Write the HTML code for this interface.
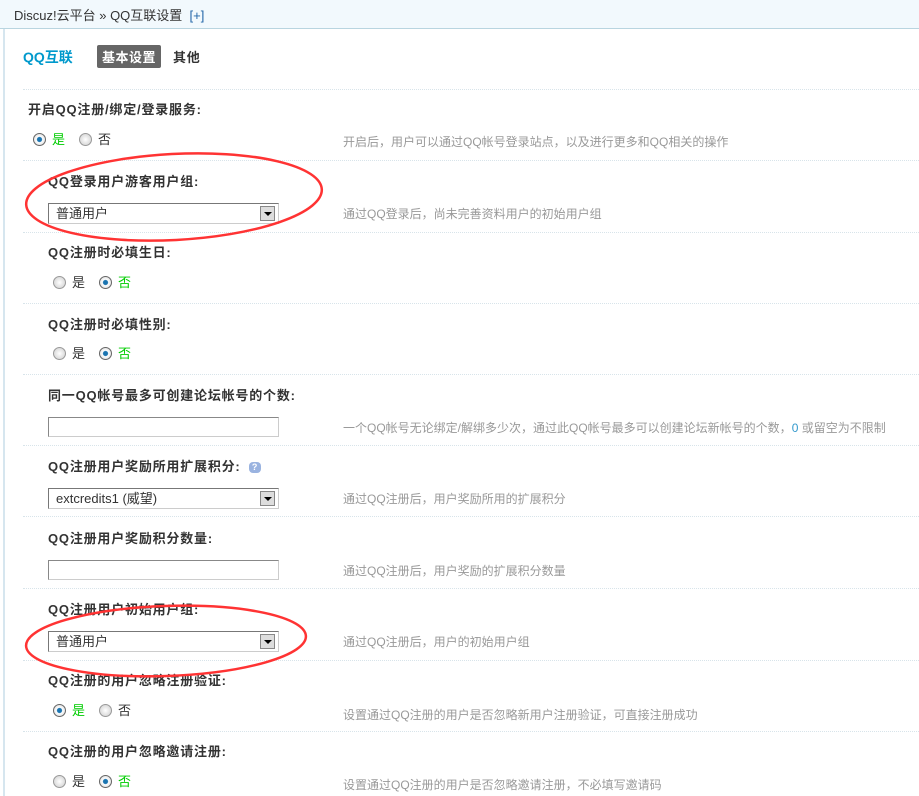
<!DOCTYPE html>
<html><head><meta charset="utf-8"><style>
body{margin:0;width:919px;height:796px;overflow:hidden;background:#fff;font:12px "Liberation Sans","Noto Sans CJK SC",sans-serif;color:#333;position:relative}
.a{position:absolute;white-space:nowrap}
.hd{position:absolute;left:0;top:0;width:919px;height:28px;background:#f2f9fd;border-bottom:1px solid #b9d5e0}
.lb{position:absolute;left:3px;top:29px;width:2px;height:767px;background:#d6e6ef}
.sep{position:absolute;left:23px;right:0;border-top:1px dotted #d8e4ea}
.lab{font-weight:bold;color:#333;font-size:13px;letter-spacing:0.8px}
.d{color:#999;font-size:12px}
.r{display:inline-block;width:13px;height:13px;border-radius:50%;border:1px solid #999;background:radial-gradient(#fff,#ccc);vertical-align:-2px;box-sizing:border-box;margin-right:6px}
.r.on{background:radial-gradient(#1a74b0 28%,#fff 38%,#ccc);border-color:#666}
.g{color:#0c0}
.rd{font-size:13px}
.rd .s{display:inline-block;width:14px}
.sel{position:absolute;left:48px;width:231px;height:21px;border:1px solid #888;border-color:#777 #ccc #ccc #777;box-sizing:border-box;background:#fff;font-size:13px;line-height:19px;padding-left:7px}
.sel i{position:absolute;right:3px;top:2px;width:15px;height:15px;border:1px solid #888;background:#ddd;box-sizing:border-box}
.sel i:after{content:"";position:absolute;left:3px;top:5px;border:4px solid transparent;border-top:4px solid #000}
.inp{position:absolute;left:48px;width:231px;height:20px;border:1px solid;border-color:#888 #ccc #ccc #888;box-sizing:border-box}
</style></head><body>
<div class="hd"></div>
<div class="a" style="left:14px;top:5px;color:#333;font-size:13px">Discuz!云平台 » QQ互联设置 &nbsp;<span style="color:#2366a8">[+]</span></div>
<div class="lb"></div>
<div class="a" style="left:23px;top:47px;color:#09c;font-weight:bold;font-size:14px">QQ互联</div>
<div class="a" style="left:97px;top:45px;background:#666;color:#fff;font-weight:bold;padding:2px 5px;border-radius:2px;font-size:13px;letter-spacing:0.5px">基本设置</div>
<div class="a lab" style="left:173px;top:47px">其他</div>

<div class="sep" style="top:89px"></div>
<div class="a lab" style="left:28px;top:99px">开启QQ注册/绑定/登录服务:</div>
<div class="a rd" style="left:33px;top:129px"><span class="r on"></span><span class="g">是</span><span class="s"></span><span class="r"></span>否</div>
<div class="a d" style="left:343px;top:133px">开启后，用户可以通过QQ帐号登录站点，以及进行更多和QQ相关的操作</div>

<div class="sep" style="top:160px"></div>
<div class="a lab" style="left:48px;top:171px">QQ登录用户游客用户组:</div>
<div class="sel" style="top:203px">普通用户<i></i></div>
<div class="a d" style="left:343px;top:205px">通过QQ登录后，尚未完善资料用户的初始用户组</div>

<div class="sep" style="top:232px"></div>
<div class="a lab" style="left:48px;top:242px">QQ注册时必填生日:</div>
<div class="a rd" style="left:53px;top:272px"><span class="r"></span>是<span class="s"></span><span class="r on"></span><span class="g">否</span></div>

<div class="sep" style="top:303px"></div>
<div class="a lab" style="left:48px;top:314px">QQ注册时必填性别:</div>
<div class="a rd" style="left:53px;top:343px"><span class="r"></span>是<span class="s"></span><span class="r on"></span><span class="g">否</span></div>

<div class="sep" style="top:374px"></div>
<div class="a lab" style="left:48px;top:385px">同一QQ帐号最多可创建论坛帐号的个数:</div>
<div class="inp" style="top:417px"></div>
<div class="a d" style="left:343px;top:419px">一个QQ帐号无论绑定/解绑多少次，通过此QQ帐号最多可以创建论坛新帐号的个数，<span style="color:#39c">0</span> 或留空为不限制</div>

<div class="sep" style="top:445px"></div>
<div class="a lab" style="left:48px;top:456px">QQ注册用户奖励所用扩展积分: <span style="display:inline-block;width:12px;height:11px;border-radius:4px;background:#9ab3e0;color:#fff;font-size:9px;text-align:center;line-height:11px;vertical-align:1px;margin-left:4px">?</span></div>
<div class="sel" style="top:488px">extcredits1 (威望)<i></i></div>
<div class="a d" style="left:343px;top:490px">通过QQ注册后，用户奖励所用的扩展积分</div>

<div class="sep" style="top:516px"></div>
<div class="a lab" style="left:48px;top:528px">QQ注册用户奖励积分数量:</div>
<div class="inp" style="top:560px"></div>
<div class="a d" style="left:343px;top:562px">通过QQ注册后，用户奖励的扩展积分数量</div>

<div class="sep" style="top:588px"></div>
<div class="a lab" style="left:48px;top:599px">QQ注册用户初始用户组:</div>
<div class="sel" style="top:631px">普通用户<i></i></div>
<div class="a d" style="left:343px;top:633px">通过QQ注册后，用户的初始用户组</div>

<div class="sep" style="top:660px"></div>
<div class="a lab" style="left:48px;top:670px">QQ注册的用户忽略注册验证:</div>
<div class="a rd" style="left:53px;top:700px"><span class="r on"></span><span class="g">是</span><span class="s"></span><span class="r"></span>否</div>
<div class="a d" style="left:343px;top:706px">设置通过QQ注册的用户是否忽略新用户注册验证，可直接注册成功</div>

<div class="sep" style="top:731px"></div>
<div class="a lab" style="left:48px;top:741px">QQ注册的用户忽略邀请注册:</div>
<div class="a rd" style="left:53px;top:771px"><span class="r"></span>是<span class="s"></span><span class="r on"></span><span class="g">否</span></div>
<div class="a d" style="left:343px;top:776px">设置通过QQ注册的用户是否忽略邀请注册，不必填写邀请码</div>

<svg class="a" style="left:0;top:0" width="919" height="796">
<ellipse cx="174" cy="197" rx="148" ry="43" fill="none" stroke="#f33" stroke-width="2.5" transform="rotate(-3 174 197)"/>
<ellipse cx="166" cy="641" rx="140" ry="35" fill="none" stroke="#f33" stroke-width="2.5" transform="rotate(-2 166 641)"/>
</svg>
</body></html>
